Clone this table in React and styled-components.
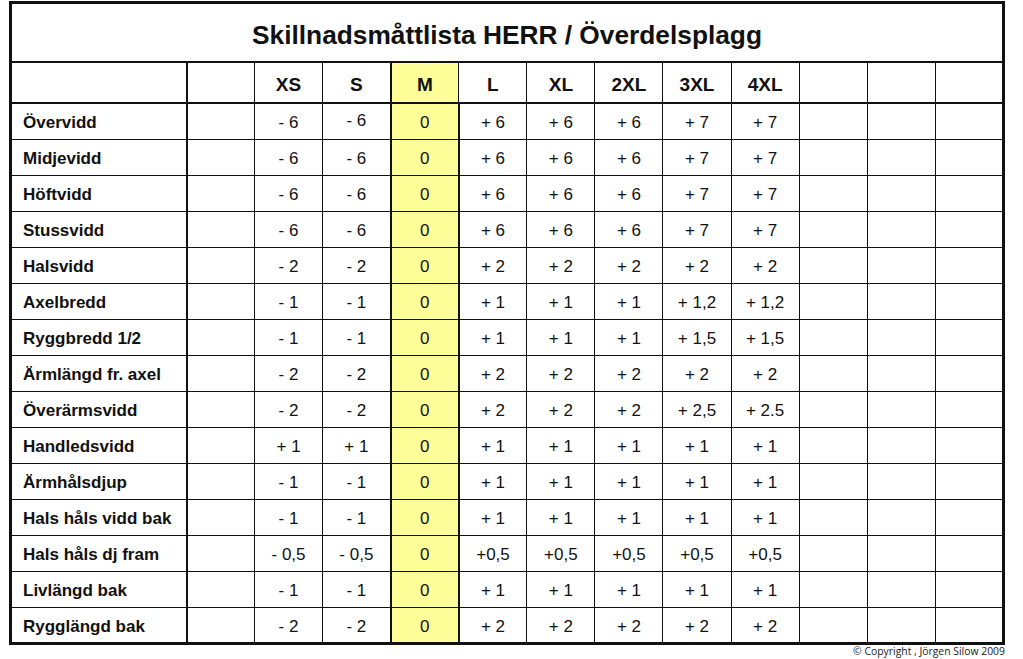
import React from 'react';
import styled, { createGlobalStyle } from 'styled-components';

const GlobalStyle = createGlobalStyle`
  html, body {
    margin: 0;
    padding: 0;
    background: #ffffff;
  }
  body {
    font-family: 'Liberation Sans', Arial, sans-serif;
    color: #111111;
  }
`;

const Sheet = styled.div`
  width: 1023px;
  height: 659px;
  padding: 1px 0 0 9px;
  box-sizing: border-box;
  display: flex;
  flex-direction: column;
`;

const Table = styled.table`
  width: 996px;
  border-collapse: collapse;
  table-layout: fixed;
  border: 3px solid #111;
`;

const TitleCell = styled.th`
  height: 51px;
  padding: 6px 0 0;
  font-size: 26.3px;
  font-weight: bold;
  text-align: center;
  border-bottom: 2px solid #111;
`;

const HeadCell = styled.th`
  height: 35px;
  padding: 4px 0 0;
  font-size: 19px;
  font-weight: bold;
  text-align: center;
  border-right: ${({ $thick }) => ($thick ? '2px' : '1px')} solid #111;
  border-left: ${({ $m }) => ($m ? '2px' : '1px')} solid #111;
  border-bottom: 2px solid #111;
  background: ${({ $m }) => ($m ? '#ffff99' : '#ffffff')};
`;

const Row = styled.tr`
  height: 36px;
`;

const LabelCell = styled.td`
  padding: 4px 0 0 11px;
  font-size: 17px;
  font-weight: bold;
  white-space: nowrap;
  border-top: 1.5px solid #111;
  border-right: 2px solid #111;
`;

const ValueCell = styled.td`
  padding: ${({ $raised }) => ($raised ? '0' : '4px')} 0 0;
  font-size: 17px;
  text-align: center;
  white-space: nowrap;
  border-top: 1.5px solid #111;
  border-left: ${({ $m }) => ($m ? '2px' : '1px')} solid #111;
  border-right: ${({ $m }) => ($m ? '2px' : '1px')} solid #111;
  background: ${({ $m }) => ($m ? '#ffff99' : '#ffffff')};
`;

const Copyright = styled.div`
  width: 996px;
  margin-top: 0;
  text-align: right;
  font-family: 'Open Sans', 'Noto Sans', sans-serif;
  font-size: 10.4px;
  line-height: 13px;
  color: #222;
`;

const sizes = ['XS', 'S', 'M', 'L', 'XL', '2XL', '3XL', '4XL', '', '', ''];

const rows = [
  ['Övervidd', ['- 6', '- 6', '0', '+ 6', '+ 6', '+ 6', '+ 7', '+ 7']],
  ['Midjevidd', ['- 6', '- 6', '0', '+ 6', '+ 6', '+ 6', '+ 7', '+ 7']],
  ['Höftvidd', ['- 6', '- 6', '0', '+ 6', '+ 6', '+ 6', '+ 7', '+ 7']],
  ['Stussvidd', ['- 6', '- 6', '0', '+ 6', '+ 6', '+ 6', '+ 7', '+ 7']],
  ['Halsvidd', ['- 2', '- 2', '0', '+ 2', '+ 2', '+ 2', '+ 2', '+ 2']],
  ['Axelbredd', ['- 1', '- 1', '0', '+ 1', '+ 1', '+ 1', '+ 1,2', '+ 1,2']],
  ['Ryggbredd 1/2', ['- 1', '- 1', '0', '+ 1', '+ 1', '+ 1', '+ 1,5', '+ 1,5']],
  ['Ärmlängd fr. axel', ['- 2', '- 2', '0', '+ 2', '+ 2', '+ 2', '+ 2', '+ 2']],
  ['Överärmsvidd', ['- 2', '- 2', '0', '+ 2', '+ 2', '+ 2', '+ 2,5', '+ 2.5']],
  ['Handledsvidd', ['+ 1', '+ 1', '0', '+ 1', '+ 1', '+ 1', '+ 1', '+ 1']],
  ['Ärmhålsdjup', ['- 1', '- 1', '0', '+ 1', '+ 1', '+ 1', '+ 1', '+ 1']],
  ['Hals håls vidd bak', ['- 1', '- 1', '0', '+ 1', '+ 1', '+ 1', '+ 1', '+ 1']],
  ['Hals håls dj fram', ['- 0,5', '- 0,5', '0', '+0,5', '+0,5', '+0,5', '+0,5', '+0,5']],
  ['Livlängd bak', ['- 1', '- 1', '0', '+ 1', '+ 1', '+ 1', '+ 1', '+ 1']],
  ['Rygglängd bak', ['- 2', '- 2', '0', '+ 2', '+ 2', '+ 2', '+ 2', '+ 2']],
];

const App = () => {
  return (
    <Sheet>
      <GlobalStyle />
      <Table>
        <colgroup>
          <col style={{ width: 176 }} />
          <col style={{ width: 68 }} />
          {sizes.map((s, i) => (
            <col key={i} />
          ))}
        </colgroup>
        <thead>
          <tr>
            <TitleCell colSpan={13}>Skillnadsmåttlista HERR / Överdelsplagg</TitleCell>
          </tr>
          <tr>
            <HeadCell $thick />
            <HeadCell />
            {sizes.map((s, i) => (
              <HeadCell key={i} $m={s === 'M'}>
                {s}
              </HeadCell>
            ))}
          </tr>
        </thead>
        <tbody>
          {rows.map(([label, values], r) => (
            <Row key={label}>
              <LabelCell>{label}</LabelCell>
              <ValueCell />
              {sizes.map((s, i) => (
                <ValueCell key={i} $m={s === 'M'} $raised={r === 0 && s === 'S'}>
                  {values[i] || ''}
                </ValueCell>
              ))}
            </Row>
          ))}
        </tbody>
      </Table>
      <Copyright>© Copyright , Jörgen Silow 2009</Copyright>
    </Sheet>
  );
};

export default App;
